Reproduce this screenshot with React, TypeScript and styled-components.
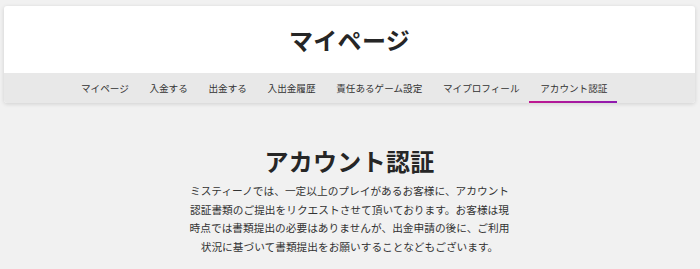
import React from "react";
import styled, { createGlobalStyle } from "styled-components";

const Global = createGlobalStyle`
  html, body { margin: 0; padding: 0; background: #f1f1f1; }
  body { font-family: "Noto Sans CJK JP", "Noto Sans", sans-serif; color: #2b2b2b; }
`;

const Page = styled.div`
  padding: 6px 5px 0 4px;
`;

const Card = styled.header`
  background: #ffffff;
  border-radius: 3px;
  box-shadow: 0 1px 4px rgba(0, 0, 0, 0.14);
  overflow: hidden;
`;

const Title = styled.h1`
  margin: 0;
  height: 67px;
  display: flex;
  align-items: center;
  justify-content: center;
  font-size: 24px;
  font-weight: 700;
  color: #262626;
  letter-spacing: 0.3px;
  box-sizing: border-box;
`;

const Nav = styled.nav`
  background: #e8e8e8;
  height: 30px;
  display: flex;
  justify-content: center;
  align-items: stretch;
  padding-right: 12px;
`;

const NavItem = styled.a<{ $active?: boolean }>`
  position: relative;
  display: flex;
  align-items: center;
  padding: 0 9.7px 0 11px;
  font-size: 9.6px;
  color: #333;
  text-decoration: none;
  white-space: nowrap;
  &::after {
    content: "";
    position: absolute;
    left: 0;
    right: 0;
    bottom: 0;
    height: 2px;
    background: ${(p) => (p.$active ? "linear-gradient(90deg, #c0188f, #8f1ab0)" : "transparent")};
  }
`;

const Main = styled.main`
  display: flex;
  flex-direction: column;
  align-items: center;
  padding-top: 42px;
`;

const Heading = styled.h2`
  margin: 0;
  font-size: 24px;
  font-weight: 700;
  line-height: 32px;
  color: #262626;
  letter-spacing: 0.3px;
`;

const Text = styled.p`
  margin: 5px 0 0;
  width: 324px;
  font-size: 10.7px;
  line-height: 18.7px;
  text-align: center;
  color: #333;
`;

const items = [
  "マイページ",
  "入金する",
  "出金する",
  "入出金履歴",
  "責任あるゲーム設定",
  "マイプロフィール",
  "アカウント認証",
];

export default function App() {
  return (
    <>
      <Global />
      <Page>
        <Card>
          <Title>マイページ</Title>
          <Nav>
            {items.map((t, i) => (
              <NavItem key={t} href="#" $active={i === items.length - 1}>
                {t}
              </NavItem>
            ))}
          </Nav>
        </Card>
        <Main>
          <Heading>アカウント認証</Heading>
          <Text>
            ミスティーノでは、一定以上のプレイがあるお客様に、アカウント認証書類のご提出をリクエストさせて頂いております。お客様は現時点では書類提出の必要はありませんが、出金申請の後に、ご利用状況に基づいて書類提出をお願いすることなどもございます。
          </Text>
        </Main>
      </Page>
    </>
  );
}
